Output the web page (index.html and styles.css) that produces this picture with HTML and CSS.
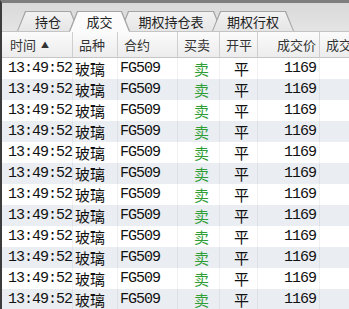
FILE: index.html
```html
<!DOCTYPE html>
<html lang="zh-CN">
<head>
    <meta charset="UTF-8">
    <title>成交</title>
    <link rel="stylesheet" href="styles.css">
</head>
<body>

<div class="panel">
    <div class="tabs">
        <div class="tab" style="width: 62px">持仓</div>
        <div class="tab active" style="width: 61px">成交</div>
        <div class="tab" style="width: 102px">期权持仓表</div>
        <div class="tab" style="width: 82px">期权行权</div>
    </div>

    <div class="grid">
        <div class="row head">
            <div class="cell">时间 <span class="sort">▲</span></div>
            <div class="cell">品种</div>
            <div class="cell">合约</div>
            <div class="cell">买卖</div>
            <div class="cell">开平</div>
            <div class="cell right">成交价</div>
            <div class="cell">成交</div>
        </div>
        <div id="rows"></div>
    </div>
</div>

<script>
    var rows = document.getElementById('rows');
    for (var i = 0; i < 12; i++) {
        var row = document.createElement('div');
        row.className = 'row data' + (i % 2 ? ' alt' : '');
        row.innerHTML =
            '<div class="cell time mono">13:49:52</div>' +
            '<div class="cell">玻璃</div>' +
            '<div class="cell mono">FG509</div>' +
            '<div class="cell mid sell">卖</div>' +
            '<div class="cell mid">平</div>' +
            '<div class="cell right mono">1169</div>' +
            '<div class="cell"></div>';
        rows.appendChild(row);
    }
</script>

</body>
</html>
```

FILE: styles.css
```css
body {
    margin: 0;
    background: #ffffff;
    font-family: "Noto Sans CJK SC", "Noto Sans", sans-serif;
    overflow: hidden;
}

.panel {
    width: 347px;
    height: 306px;
    border-top: 3px solid #7e7e7e;
    border-left: 2px solid #3c3c3c;
    overflow: hidden;
}

.tabs {
    display: flex;
    align-items: flex-end;
    height: 28px;
    padding-left: 15px;
    background: linear-gradient(#d9d9d9, #e4e4e4);
}

.tab {
    position: relative;
    height: 20px;
    margin-right: -10px;
    font-size: 13px;
    line-height: 21px;
    color: #222;
    text-align: center;
    z-index: 1;
}

.tab::before,
.tab::after {
    content: "";
    position: absolute;
    z-index: -1;
    clip-path: polygon(0 100%, 8px 0, calc(100% - 8px) 0, 100% 100%);
}

.tab::before {
    inset: 0;
    background: #a4a4a4;
}

.tab::after {
    inset: 1px 1px 0 1px;
    background: linear-gradient(#f2f2f2, #e6e6e6);
}

.tab.active {
    z-index: 5;
}

.tab.active::after {
    inset: 1px 1px -1px 1px;
    background: #fbfbfb;
}

.grid {
    width: 378px;
}

.row {
    display: grid;
    grid-template-columns: 71px 45px 60px 42px 38px 62px 60px;
}

.head {
    height: 25px;
    border-top: 1px solid #c4c4c4;
    border-bottom: 1px solid #c6c6c6;
    background: linear-gradient(#fbfbfb, #ececec);
    font-size: 13px;
    color: #333;
    line-height: 25px;
}

.head .cell {
    padding: 0 6px;
    border-right: 1px solid #cfcfcf;
    white-space: nowrap;
}

.head .cell:first-child {
    padding-left: 8px;
}

.head .right {
    text-align: right;
    padding-right: 3px;
}

.sort {
    font-size: 8px;
    vertical-align: 2px;
    margin-left: 2px;
}

.data {
    height: 21px;
    line-height: 21px;
    font-size: 15px;
    color: #111;
}

.data .cell {
    padding: 0 2px;
    border-right: 1px solid #f2f2f2;
    white-space: nowrap;
}

.data.alt {
    background: #eaedf2;
}

.data.alt .cell {
    border-right-color: #dde1e7;
}

.data .time {
    padding-left: 6px;
    overflow: visible;
}

.mono {
    font-family: "Liberation Mono", monospace;
    font-size: 15px;
    letter-spacing: -1px;
}

.data .mid {
    text-align: center;
    padding-left: 8px;
}

.data .right {
    text-align: right;
    padding-right: 3px;
}

.sell {
    color: #2f9e35;
}
```
